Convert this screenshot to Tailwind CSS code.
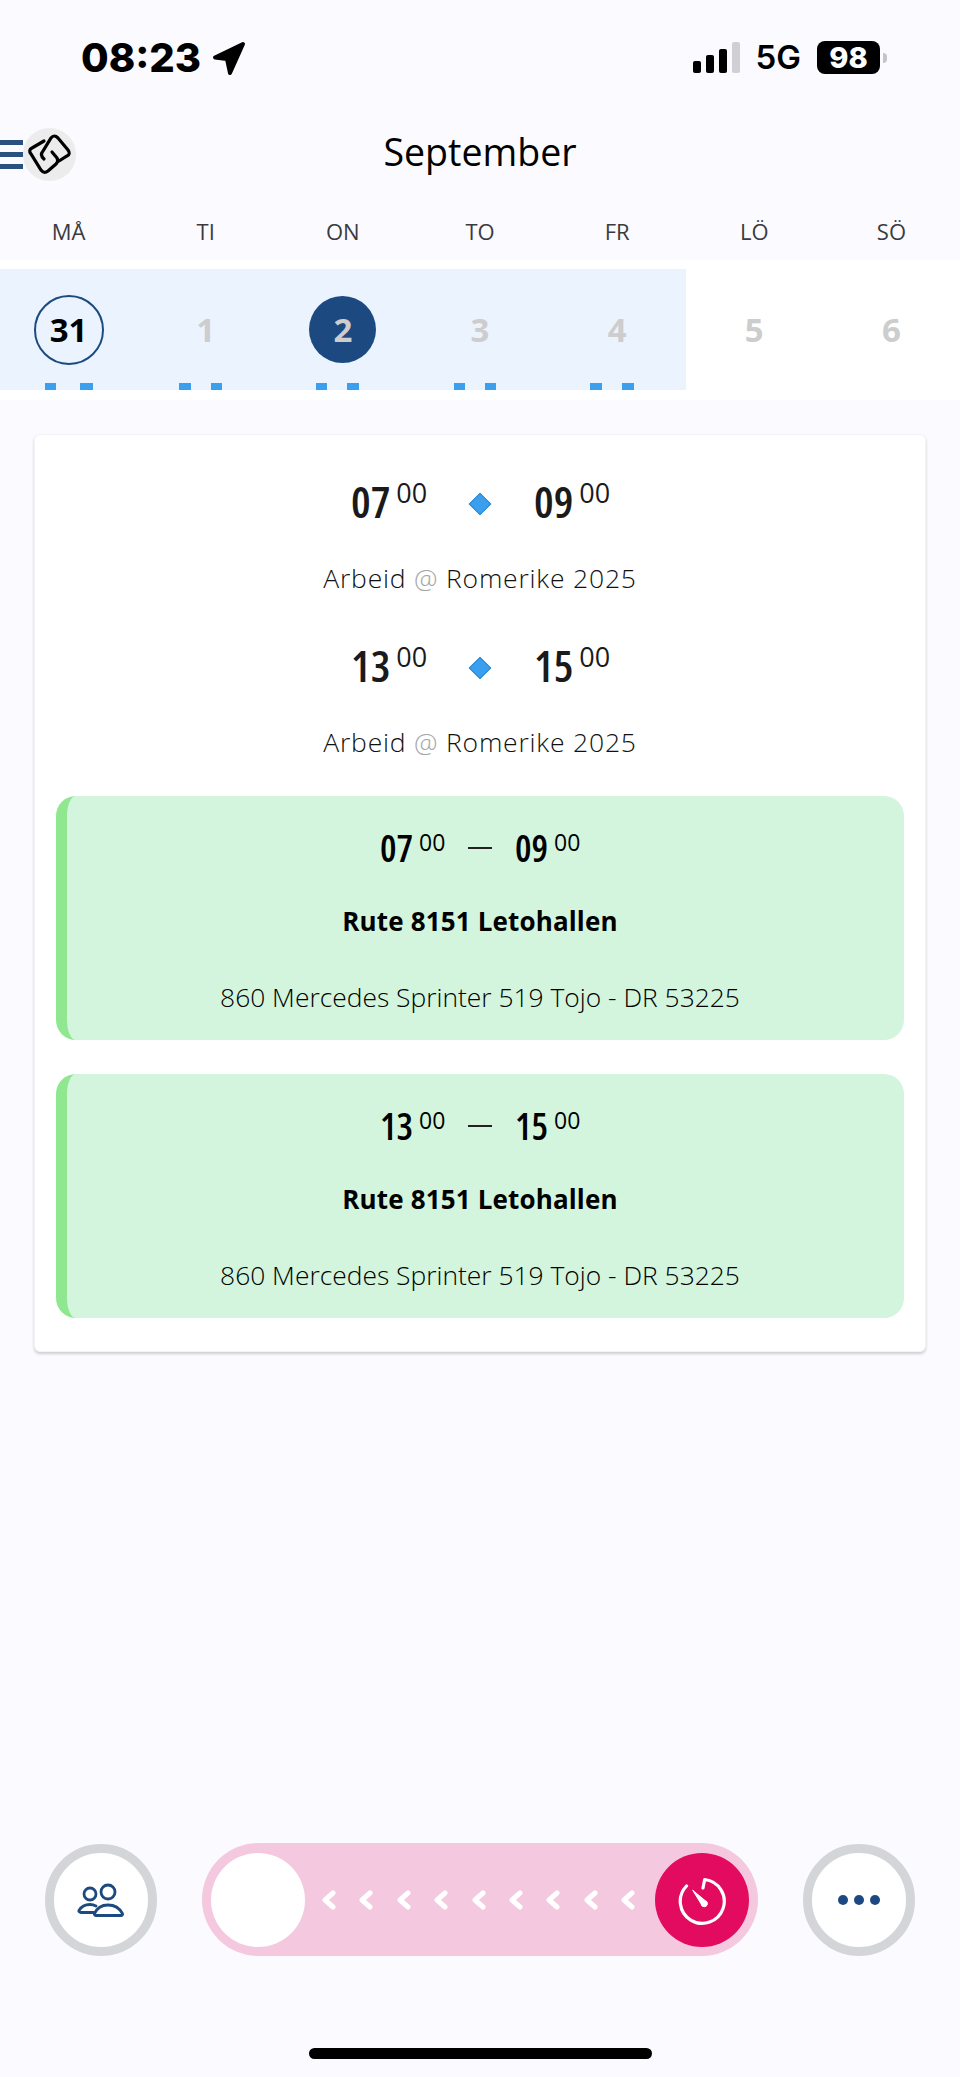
<!DOCTYPE html>
<html lang="nb">

<head>
  <meta charset="UTF-8" />
  <meta name="viewport" content="width=device-width, initial-scale=1.0" />
  <title>September</title>
  <script src="https://cdn.jsdelivr.net/npm/@tailwindcss/browser@4"></script>
</head>

<body class="bg-[#fafaff] font-['Open_Sans',sans-serif]">
  <div class="h-[2077px] w-[960px] flex flex-col overflow-hidden">

    <!-- Status bar -->
    <div class="h-[128px] flex items-start">
      <div class="flex items-center pt-[37px] pl-[81px] h-[78px]">
        <span class="font-['Inter',sans-serif] font-extrabold text-[40px] leading-none text-black">08:23</span>
        <svg class="ml-[10px]" width="36" height="36" viewBox="0 0 36 36"><path d="M32 4 L4 17.5 L16 19 L19 33 Z" fill="#000" stroke="#000" stroke-width="4" stroke-linejoin="round" /></svg>
      </div>
      <div class="ml-auto flex items-center pt-[37px] h-[78px] pr-[73px]">
        <div class="flex items-end gap-[5px] h-[31px]">
          <div class="w-[8px] h-[12px] rounded-[2px] bg-black"></div>
          <div class="w-[8px] h-[18px] rounded-[2px] bg-black"></div>
          <div class="w-[8px] h-[24px] rounded-[2px] bg-black"></div>
          <div class="w-[8px] h-[31px] rounded-[2px] bg-[#cfcfd6]"></div>
        </div>
        <span class="ml-[16px] font-['Inter',sans-serif] font-semibold text-[33px] leading-none text-black">5G</span>
        <div class="ml-[16px] w-[63px] h-[33px] rounded-[8px] bg-black flex items-center justify-center font-['Inter',sans-serif] font-extrabold text-[29px] leading-none text-white">98</div>
        <div class="ml-[3px] w-[4px] h-[10px] rounded-r-full bg-[#c4c4cc]"></div>
      </div>
    </div>

    <!-- Header -->
    <div class="h-[53px] flex items-center">
      <div class="w-[100px] flex items-center">
        <div class="w-[23px] flex flex-col gap-[7px]">
          <div class="h-[5px] bg-[#2a5080]"></div>
          <div class="h-[5px] bg-[#2a5080]"></div>
          <div class="h-[5px] bg-[#2a5080]"></div>
        </div>
        <div class="w-[53px] h-[53px] rounded-full bg-[#ececec] flex items-center justify-center">
          <svg width="53" height="53" viewBox="0 0 53 53" fill="none" stroke="#000" stroke-width="3.2" stroke-linecap="round">
            <path d="M21 31 Q16.500 27 20 23 L28 10 Q31 6 35 10 L45 22 Q48 26 44 28 L36 33" />
            <path d="M21 13 L9 20 Q5 22 8 26 L18 42 Q21 46 25 43 L33 36 Q36 33 34 30 L29 24" />
          </svg>
        </div>
      </div>
      <div class="flex-1 text-center text-[37.500px] leading-none text-black -mt-[5px]">September</div>
      <div class="w-[100px]"></div>
    </div>

    <!-- Weekdays -->
    <div class="h-[79px] pt-[30px] grid grid-cols-7 text-center text-[22px] leading-[40px] text-[#3a3a3f]">
      <div>MÅ</div>
      <div>TI</div>
      <div>ON</div>
      <div>TO</div>
      <div>FR</div>
      <div>LÖ</div>
      <div>SÖ</div>
    </div>

    <!-- Week strip -->
    <div class="h-[140px] bg-white pt-[9px]">
      <div class="h-[121px] grid grid-cols-7 text-center font-bold text-[33px] text-[#cdcdcd]">
        <div class="bg-[#eaf3fe] flex flex-col items-center justify-between">
          <div class="mt-[26px] w-[70px] h-[70px] rounded-full border-2 border-[#1c4a80] flex items-center justify-center text-black">31</div>
          <div class="flex gap-[24px]"><div class="w-[11px] h-[7px] bg-[#3b9ff0]"></div><div class="w-[13px] h-[7px] bg-[#3b9ff0]"></div></div>
        </div>
        <div class="bg-[#eaf3fe] flex flex-col items-center justify-between">
          <div class="mt-[26px] w-[70px] h-[70px] flex items-center justify-center">1</div>
          <div class="mr-[10px] flex gap-[20px]"><div class="w-[12px] h-[7px] bg-[#3b9ff0]"></div><div class="w-[11px] h-[7px] bg-[#3b9ff0]"></div></div>
        </div>
        <div class="bg-[#eaf3fe] flex flex-col items-center justify-between">
          <div class="mt-[27px] w-[67px] h-[67px] rounded-full bg-[#1c4a80] flex items-center justify-center">2</div>
          <div class="mr-[10px] flex gap-[20px]"><div class="w-[11px] h-[7px] bg-[#3b9ff0]"></div><div class="w-[12px] h-[7px] bg-[#3b9ff0]"></div></div>
        </div>
        <div class="bg-[#eaf3fe] flex flex-col items-center justify-between">
          <div class="mt-[26px] w-[70px] h-[70px] flex items-center justify-center">3</div>
          <div class="mr-[10px] flex gap-[20px]"><div class="w-[11px] h-[7px] bg-[#3b9ff0]"></div><div class="w-[11px] h-[7px] bg-[#3b9ff0]"></div></div>
        </div>
        <div class="bg-[#eaf3fe] flex flex-col items-center justify-between">
          <div class="mt-[26px] w-[70px] h-[70px] flex items-center justify-center">4</div>
          <div class="mr-[10px] flex gap-[20px]"><div class="w-[12px] h-[7px] bg-[#3b9ff0]"></div><div class="w-[12px] h-[7px] bg-[#3b9ff0]"></div></div>
        </div>
        <div class="flex flex-col items-center">
          <div class="mt-[26px] w-[70px] h-[70px] flex items-center justify-center">5</div>
        </div>
        <div class="flex flex-col items-center">
          <div class="mt-[26px] w-[70px] h-[70px] flex items-center justify-center">6</div>
        </div>
      </div>
    </div>

    <!-- Day card -->
    <div class="mt-[34px] mx-[34px] h-[918px] bg-white rounded-[6px] border border-[#f3f3f6] shadow-[0_2px_3px_rgba(0,0,0,0.18)] px-[21px] pt-[44px]">
      <div class="h-[47px] flex items-start justify-center text-[#1a1a1a]">
        <div class="w-[75px] flex items-start font-semibold text-[44px] leading-[44px] [font-stretch:75%]">07<span class="ml-[6px] text-[27px] leading-[27px] font-normal [font-stretch:100%]">00</span></div>
        <div class="mt-[17px] mx-[46px] w-[16px] h-[16px] rotate-45 bg-[#3b9ff0] border border-[#2f86cc]"></div>
        <div class="w-[75px] flex items-start font-semibold text-[44px] leading-[44px] [font-stretch:75%]">09<span class="ml-[6px] text-[27px] leading-[27px] font-normal [font-stretch:100%]">00</span></div>
      </div>
      <div class="mt-[32px] h-[40px] text-center text-[26.500px] leading-[40px] tracking-[0.8px] font-light text-[#111]">Arbeid <span class="text-[#a5a5a5]">@</span> Romerike 2025</div>
      <div class="mt-[45px] h-[47px] flex items-start justify-center text-[#1a1a1a]">
        <div class="w-[75px] flex items-start font-semibold text-[44px] leading-[44px] [font-stretch:75%]">13<span class="ml-[6px] text-[27px] leading-[27px] font-normal [font-stretch:100%]">00</span></div>
        <div class="mt-[17px] mx-[46px] w-[16px] h-[16px] rotate-45 bg-[#3b9ff0] border border-[#2f86cc]"></div>
        <div class="w-[75px] flex items-start font-semibold text-[44px] leading-[44px] [font-stretch:75%]">15<span class="ml-[6px] text-[27px] leading-[27px] font-normal [font-stretch:100%]">00</span></div>
      </div>
      <div class="mt-[32px] h-[40px] text-center text-[26.500px] leading-[40px] tracking-[0.8px] font-light text-[#111]">Arbeid <span class="text-[#a5a5a5]">@</span> Romerike 2025</div>

      <!-- Shifts -->
      <div class="mt-[34px] h-[244px] rounded-[20px] bg-[#d3f5dd] border-l-[11px] border-[#8fe88f] text-center pr-[11px] pt-[34px]">
        <div class="h-[36px] flex items-start justify-center text-black">
          <div class="w-[65px] flex items-start font-semibold text-[37px] leading-[36px] [font-stretch:75%]">07<span class="ml-[6px] text-[23px] leading-[24px] font-normal [font-stretch:100%]">00</span></div>
          <div class="mt-[17px] mx-[23px] w-[24px] h-[2px] bg-[#222]"></div>
          <div class="w-[65px] flex items-start font-semibold text-[37px] leading-[36px] [font-stretch:75%]">09<span class="ml-[6px] text-[23px] leading-[24px] font-normal [font-stretch:100%]">00</span></div>
        </div>
        <div class="mt-[35px] h-[40px] text-[26px] leading-[40px] tracking-[0.15px] font-bold text-black">Rute 8151 Letohallen</div>
        <div class="mt-[36px] h-[40px] text-[26.400px] leading-[40px] font-light text-black">860 Mercedes Sprinter 519 Tojo - DR 53225</div>
      </div>
      <div class="mt-[34px] h-[244px] rounded-[20px] bg-[#d3f5dd] border-l-[11px] border-[#8fe88f] text-center pr-[11px] pt-[34px]">
        <div class="h-[36px] flex items-start justify-center text-black">
          <div class="w-[65px] flex items-start font-semibold text-[37px] leading-[36px] [font-stretch:75%]">13<span class="ml-[6px] text-[23px] leading-[24px] font-normal [font-stretch:100%]">00</span></div>
          <div class="mt-[17px] mx-[23px] w-[24px] h-[2px] bg-[#222]"></div>
          <div class="w-[65px] flex items-start font-semibold text-[37px] leading-[36px] [font-stretch:75%]">15<span class="ml-[6px] text-[23px] leading-[24px] font-normal [font-stretch:100%]">00</span></div>
        </div>
        <div class="mt-[35px] h-[40px] text-[26px] leading-[40px] tracking-[0.15px] font-bold text-black">Rute 8151 Letohallen</div>
        <div class="mt-[36px] h-[40px] text-[26.400px] leading-[40px] font-light text-black">860 Mercedes Sprinter 519 Tojo - DR 53225</div>
      </div>
    </div>

    <!-- Bottom actions -->
    <div class="mt-auto flex items-center gap-[45px] pl-[45px]">
      <div class="w-[112px] h-[112px] rounded-full bg-white border-[9px] border-[#d3d5d8] flex items-center justify-center">
        <svg width="48" height="36" viewBox="0 0 48 36" fill="none" stroke="#1c4a80" stroke-width="2.800" stroke-linecap="round" stroke-linejoin="round">
          <circle cx="13" cy="12" r="6" />
          <circle cx="31" cy="10" r="7" />
          <path d="M17 30.500 H4 c-1.500 0 -2.500 -1 -2 -2 C4 25 8 22.500 13 22.500 c2 0 4 .5 6 1.500" />
          <path d="M19 33.500 c-1 0 -2 -.8 -1.500 -1.800 C19.500 27 24 23 31 23 S43 27 45.500 31.700 c.5 1 -.5 1.800 -1.500 1.800 Z" />
        </svg>
      </div>
      <div class="w-[556px] h-[113px] rounded-full bg-[#f4c8de] flex items-center px-[9px]">
        <div class="w-[94px] h-[94px] rounded-full bg-white"></div>
        <div class="flex-1 ml-[17px] mr-[20px] flex justify-between">
          <svg width="14" height="20" viewBox="0 0 14 20" fill="none" stroke="#fff" stroke-width="5" stroke-linecap="round" stroke-linejoin="round"><path d="M11 3 L3 10 L11 17" /></svg>
          <svg width="14" height="20" viewBox="0 0 14 20" fill="none" stroke="#fff" stroke-width="5" stroke-linecap="round" stroke-linejoin="round"><path d="M11 3 L3 10 L11 17" /></svg>
          <svg width="14" height="20" viewBox="0 0 14 20" fill="none" stroke="#fff" stroke-width="5" stroke-linecap="round" stroke-linejoin="round"><path d="M11 3 L3 10 L11 17" /></svg>
          <svg width="14" height="20" viewBox="0 0 14 20" fill="none" stroke="#fff" stroke-width="5" stroke-linecap="round" stroke-linejoin="round"><path d="M11 3 L3 10 L11 17" /></svg>
          <svg width="14" height="20" viewBox="0 0 14 20" fill="none" stroke="#fff" stroke-width="5" stroke-linecap="round" stroke-linejoin="round"><path d="M11 3 L3 10 L11 17" /></svg>
          <svg width="14" height="20" viewBox="0 0 14 20" fill="none" stroke="#fff" stroke-width="5" stroke-linecap="round" stroke-linejoin="round"><path d="M11 3 L3 10 L11 17" /></svg>
          <svg width="14" height="20" viewBox="0 0 14 20" fill="none" stroke="#fff" stroke-width="5" stroke-linecap="round" stroke-linejoin="round"><path d="M11 3 L3 10 L11 17" /></svg>
          <svg width="14" height="20" viewBox="0 0 14 20" fill="none" stroke="#fff" stroke-width="5" stroke-linecap="round" stroke-linejoin="round"><path d="M11 3 L3 10 L11 17" /></svg>
          <svg width="14" height="20" viewBox="0 0 14 20" fill="none" stroke="#fff" stroke-width="5" stroke-linecap="round" stroke-linejoin="round"><path d="M11 3 L3 10 L11 17" /></svg>
        </div>
        <div class="w-[94px] h-[94px] rounded-full bg-[#e30b5f] flex items-center justify-center">
          <svg width="52" height="52" viewBox="0 0 52 52" fill="none" stroke="#fff" stroke-width="3.200" stroke-linecap="round" stroke-linejoin="round">
            <path d="M10.500 12 A22 22 0 1 0 28.700 5.500 L27 14" />
            <path d="M17 16.500 L29 26.500 A3.200 3.200 0 1 1 25 30 Z" fill="#fff" stroke-width="1" />
          </svg>
        </div>
      </div>
      <div class="w-[112px] h-[112px] rounded-full bg-white border-[9px] border-[#d3d5d8] flex items-center justify-center gap-[6px]">
        <div class="w-[10px] h-[10px] rounded-full bg-[#1c4a80]"></div>
        <div class="w-[10px] h-[10px] rounded-full bg-[#1c4a80]"></div>
        <div class="w-[10px] h-[10px] rounded-full bg-[#1c4a80]"></div>
      </div>
    </div>

    <!-- Home indicator -->
    <div class="mt-[92px] mb-[18px] mx-auto w-[343px] h-[11px] rounded-full bg-black"></div>
  </div>
</body>

</html>
